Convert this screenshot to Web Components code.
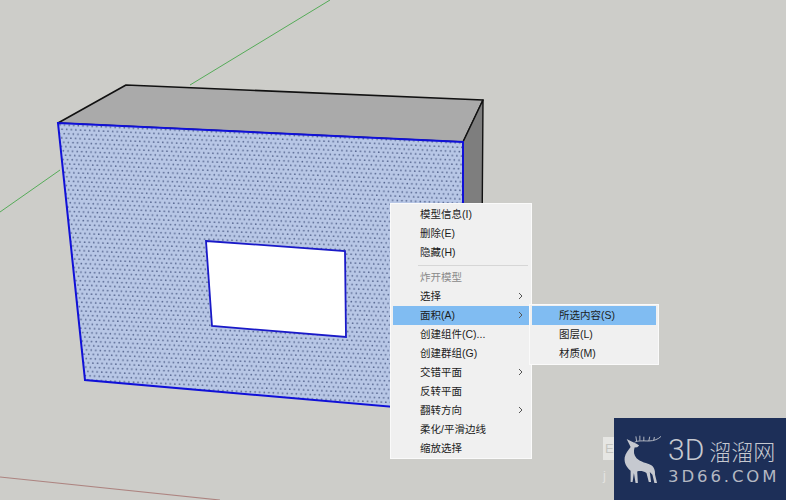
<!DOCTYPE html>
<html>
<head>
<meta charset="utf-8">
<style>
  html, body { margin: 0; padding: 0; background: #cdcdc9; }
  body { width: 786px; height: 500px; overflow: hidden; position: relative; }
</style>
</head>
<body>
<sk-scene>
  <sk-menu style="left:390px;top:203px;width:142px;padding-bottom:0">
    <sk-item>模型信息(I)</sk-item>
    <sk-item>删除(E)</sk-item>
    <sk-item>隐藏(H)</sk-item>
    <sk-sep></sk-sep>
    <sk-item disabled>炸开模型</sk-item>
    <sk-item arrow>选择</sk-item>
    <sk-item arrow active>面积(A)</sk-item>
    <sk-item>创建组件(C)...</sk-item>
    <sk-item>创建群组(G)</sk-item>
    <sk-item arrow>交错平面</sk-item>
    <sk-item>反转平面</sk-item>
    <sk-item arrow>翻转方向</sk-item>
    <sk-item>柔化/平滑边线</sk-item>
    <sk-item>缩放选择</sk-item>
  </sk-menu>
  <sk-menu style="left:529px;top:304px;width:130px">
    <sk-item active>所选内容(S)</sk-item>
    <sk-item>图层(L)</sk-item>
    <sk-item>材质(M)</sk-item>
  </sk-menu>
  <sk-ghost></sk-ghost>
  <sk-logo></sk-logo>
</sk-scene>

<script>
const sceneTemplate = document.createElement('template')
sceneTemplate.innerHTML = `
  <style>
    :host { display: block; position: absolute; inset: 0; overflow: hidden; background: #cdcdc9; }
    svg { position: absolute; left: 0; top: 0; }
  </style>
  <svg width="786" height="500" viewBox="0 0 786 500">
    <defs>
      <pattern id="dots" width="4.6" height="8.6" patternUnits="userSpaceOnUse" patternTransform="rotate(2.6)">
        <rect width="4.6" height="8.6" fill="#b8c7e6"/>
        <circle cx="1.2" cy="1.6" r=".85" fill="#55658f"/>
        <circle cx="3.5" cy="5.9" r=".85" fill="#55658f"/>
      </pattern>
    </defs>
    <line x1="0" y1="212" x2="60" y2="170" stroke="#55ab58" stroke-width="1"/>
    <line x1="190" y1="85" x2="330" y2="0" stroke="#55ab58" stroke-width="1"/>
    <line x1="0" y1="477" x2="220" y2="500" stroke="#ad8480" stroke-width="1.2"/>
    <polygon points="58,123 126,85 483,100 463,142" fill="#aaaaaa" stroke="#111" stroke-width="1.6" stroke-linejoin="round"/>
    <polygon points="463,142 483,100 482,240 463,240" fill="#7e7e7e" stroke="#111" stroke-width="1.4" stroke-linejoin="round"/>
    <path fill-rule="evenodd" d="M58,123 L463,142 L463,413 L85,380 Z M206,241 L212,326 L346,337 L345,251 Z" fill="url(#dots)"/>
    <polygon points="58,123 463,142 463,413 85,380" fill="none" stroke="#1010d8" stroke-width="2"/>
    <polygon points="206,241 345,251 346,337 212,326" fill="#fff" stroke="#1a1ac8" stroke-width="1.8"/>
  </svg>
  <slot></slot>
`
class SkScene extends HTMLElement {
  constructor() {
    super()
    this.attachShadow({ mode: 'open' }).appendChild(sceneTemplate.content.cloneNode(true))
  }
}

const menuTemplate = document.createElement('template')
menuTemplate.innerHTML = `
  <style>
    :host {
      display: flex; flex-direction: column; position: absolute; box-sizing: border-box;
      padding: 1px 2px; background: #f0f0f0; border: 1px solid #fafafa;
      font: 10.5px "Liberation Sans", "Noto Sans CJK SC", sans-serif; color: #1c1c1c;
    }
  </style>
  <slot></slot>
`
class SkMenu extends HTMLElement {
  constructor() {
    super()
    this.attachShadow({ mode: 'open' }).appendChild(menuTemplate.content.cloneNode(true))
  }
}

const itemTemplate = document.createElement('template')
itemTemplate.innerHTML = `
  <style>
    :host {
      display: flex; align-items: center; justify-content: space-between; box-sizing: border-box;
      height: 19px; padding: 0 6px 2px 27px; white-space: nowrap;
    }
    :host([active]) { background: #80bcf2; }
    :host([disabled]) { color: #8a8a8a; }
    svg { display: none; }
    :host([arrow]) svg { display: block; }
  </style>
  <slot></slot>
  <svg width="5" height="8" viewBox="0 0 5 8"><path d="M1 1l3 3-3 3" fill="none" stroke="#555" stroke-width="1"/></svg>
`
class SkItem extends HTMLElement {
  constructor() {
    super()
    this.attachShadow({ mode: 'open' }).appendChild(itemTemplate.content.cloneNode(true))
  }
}

const sepTemplate = document.createElement('template')
sepTemplate.innerHTML = `
  <style>
    :host { display: block; height: 1px; margin: 3px 1px 2px 25px; background: #d6d6d6; }
  </style>
`
class SkSep extends HTMLElement {
  constructor() {
    super()
    this.attachShadow({ mode: 'open' }).appendChild(sepTemplate.content.cloneNode(true))
  }
}

// faint stock-photo mark that pokes out from behind the logo
const ghostTemplate = document.createElement('template')
ghostTemplate.innerHTML = `
  <style>
    :host {
      display: flex; flex-direction: column; align-items: flex-start; gap: 9px;
      position: absolute; left: 603px; top: 437px; width: 11px; color: #e4e4e1;
    }
    .block {
      width: 11px; height: 23px; box-sizing: border-box; padding-left: 2px;
      background: #e6e6e3; color: #c4c4c0; font: 13px/23px "Liberation Sans", sans-serif;
    }
    .sub { font: 13px/14px "Liberation Sans", sans-serif; }
  </style>
  <div class="block">E</div>
  <div class="sub">j</div>
`
class SkGhost extends HTMLElement {
  constructor() {
    super()
    this.attachShadow({ mode: 'open' }).appendChild(ghostTemplate.content.cloneNode(true))
  }
}

const logoTemplate = document.createElement('template')
logoTemplate.innerHTML = `
  <style>
    :host {
      display: flex; align-items: flex-start; gap: 6px; position: absolute; left: 614px; top: 418px;
      width: 172px; height: 82px; box-sizing: border-box; padding: 15px 0 0 10px;
      background: #1d2f58; color: #c6c9d0;
    }
    .text { display: flex; flex-direction: column; padding-top: 4px; }
    .cn { display: flex; align-items: center; height: 26px; gap: 5px; white-space: nowrap; }
    .big { font: 300 30px/26px Roboto, "Liberation Sans", sans-serif; }
    .han { font: 300 22px/26px "Noto Sans CJK SC", sans-serif; }
    .en { font: 16.5px/14px "DejaVu Sans", sans-serif; letter-spacing: 2.9px; margin-top: 7px; white-space: nowrap; color: #b4b8c2; }
    svg { flex: none; }
  </style>
  <svg width="38" height="52" viewBox="30 25 115 155">
    <path fill="#c6c9d0" d="M38 42 L50 48 L58 52 L68 56 L76 62 L70 67 L62 68 C58 80 60 92 68 100 C80 112 100 114 114 122 C124 130 124 142 124 150 L130 175 L122 175 L116 150 L108 142 L112 172 L105 172 L98 145 C88 138 78 138 70 140 L72 175 L65 175 L60 145 L56 172 L50 172 L50 138 C38 128 30 115 32 98 C34 85 44 75 50 66 L46 58 Z"/>
    <path fill="none" stroke="#c6c9d0" stroke-width="2.6" d="M62 52 C70 46 90 48 105 48 C120 48 135 42 142 34 M68 48 L66 34 M78 47 L78 32 M90 48 L90 35 M105 48 L108 35 M120 46 L122 36"/>
  </svg>
  <div class="text">
    <div class="cn"><span class="big">3D</span><span class="han">溜溜网</span></div>
    <div class="en">3D66.COM</div>
  </div>
`
class SkLogo extends HTMLElement {
  constructor() {
    super()
    this.attachShadow({ mode: 'open' }).appendChild(logoTemplate.content.cloneNode(true))
  }
}

customElements.define('sk-scene', SkScene)
customElements.define('sk-menu', SkMenu)
customElements.define('sk-item', SkItem)
customElements.define('sk-sep', SkSep)
customElements.define('sk-ghost', SkGhost)
customElements.define('sk-logo', SkLogo)
</script>
</body>
</html>
